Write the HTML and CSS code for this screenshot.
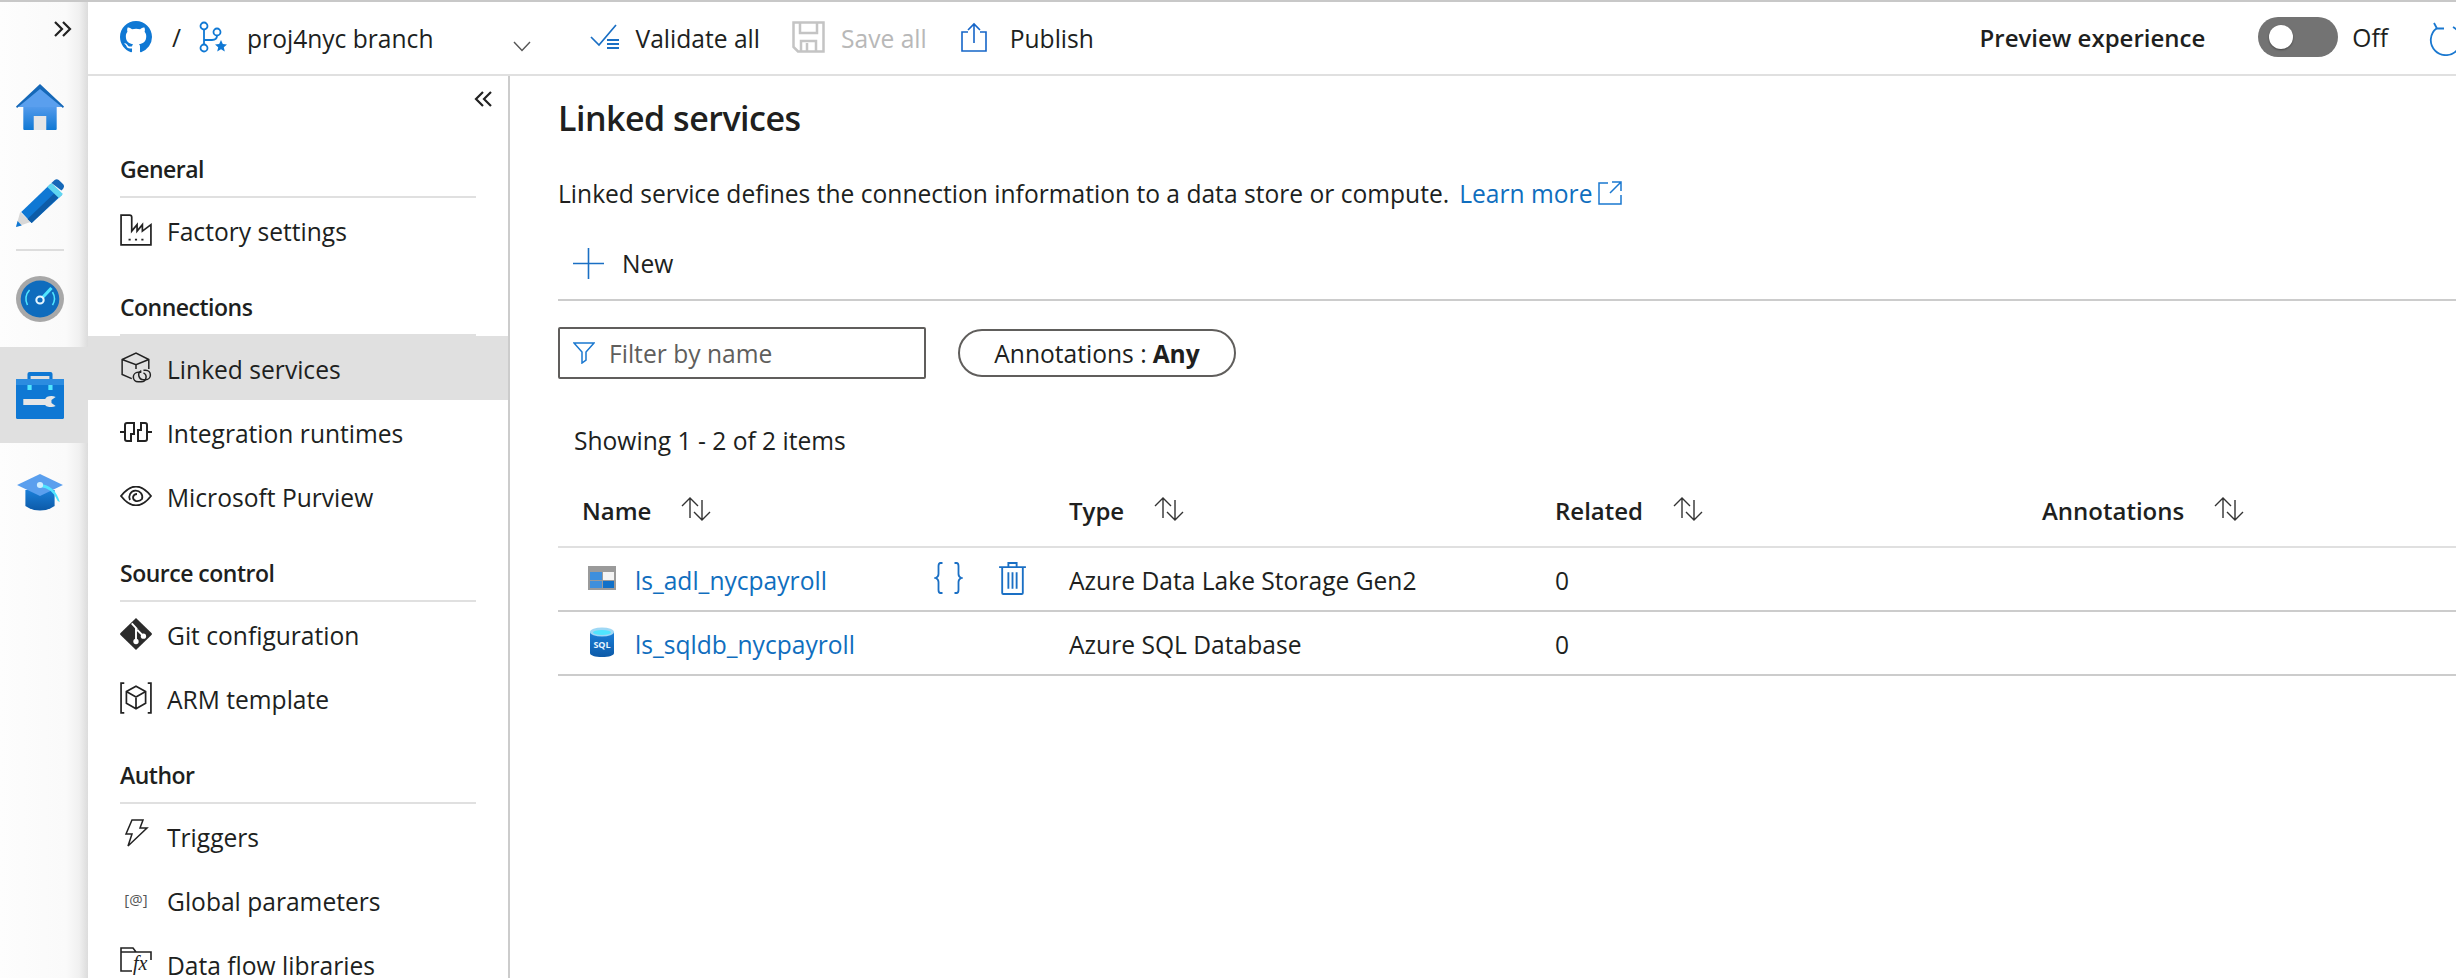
FILE: index.html
```html
<!DOCTYPE html>
<html lang="en">
<head>
    <meta charset="UTF-8">
    <title>Linked services</title>
    <link rel="stylesheet" href="styles.css">
</head>
<body>
    <svg class="defs" width="0" height="0">
        <defs>
            <linearGradient id="blue-v" x1="0" y1="0" x2="0" y2="1">
                <stop offset="0" stop-color="#5ea0ef"/>
                <stop offset="1" stop-color="#0f78d4"/>
            </linearGradient>
            <linearGradient id="sql-v" x1="0" y1="0" x2="0" y2="1">
                <stop offset="0" stop-color="#1b7fd8"/>
                <stop offset="1" stop-color="#0c5aa8"/>
            </linearGradient>
            <g id="sort-arrows" fill="none" stroke="#333" stroke-width="1.400">
                <path d="M9 21V1M1 9l8-8 8 8"/>
                <path d="M21 3v20M13 15l8 8 8-8"/>
            </g>
        </defs>
    </svg>
    <div class="app">
        <nav class="rail">
            <div class="rail-expand">
                <svg width="18" height="18" viewBox="0 0 18 18" fill="none" stroke="#222" stroke-width="2.200"><path d="M1 2l7 7-7 7M9 2l7 7-7 7"/></svg>
            </div>
            <div class="rail-item rail-home">
                <svg width="48" height="48" viewBox="0 0 46 48" preserveAspectRatio="none">
                    <path d="M7 20h32v26a1 1 0 0 1-1 1H8a1 1 0 0 1-1-1z" fill="url(#blue-v)"/>
                    <path d="M23 4L44 24H2z" fill="#5a9fee"/>
                    <path d="M0 23.500L23 1l23 22.500-1 1.500L23 6 1 25z" fill="#1568b8"/>
                    <rect x="17" y="33" width="12" height="14" fill="#e6e6e6"/>
                </svg>
            </div>
            <div class="rail-item rail-author">
                <svg width="48" height="50" viewBox="0 0 46 50" preserveAspectRatio="none">
                    <path d="M0 49l4-15 10 10z" fill="#d8d8d8"/>
                    <path d="M0 49l1.500-6 4 4.500z" fill="#0f78d4"/>
                    <path d="M5 34L33 6l11 11-29 28z" fill="#0f78d4"/>
                    <path d="M15 45L44 16l-4-4-29 29z" fill="#0d5ca8"/>
                    <path d="M30 9l4-4 11 11-4 4z" fill="#5fd6f0"/>
                    <path d="M34 5l3-3q2-1.500 4 0l4 4q2 2 0 5l-1.500 1.500z" fill="#1568b8"/>
                </svg>
            </div>
            <div class="rail-sep"></div>
            <div class="rail-item rail-monitor">
                <svg width="48" height="48" viewBox="0 0 46 48" preserveAspectRatio="none">
                    <circle cx="23" cy="24" r="23" fill="#a8a8a8"/>
                    <circle cx="23" cy="24" r="18.500" fill="#0f6cbd"/>
                    <g fill="none" stroke="#50e6ff" stroke-width="1.500">
                        <path d="M11 30a13 13 0 0 1 2-15"/>
                        <path d="M35 17a13 13 0 0 1 0 13"/>
                        <path d="M25 23l9-10" stroke-width="3"/>
                    </g>
                    <circle cx="23" cy="25" r="3.500" fill="none" stroke="#e6f6ff" stroke-width="2"/>
                </svg>
            </div>
            <div class="rail-item rail-manage">
                <svg width="48" height="48" viewBox="0 0 46 48" preserveAspectRatio="none">
                    <path d="M11 10V3q0-2 2-2h20q2 0 2 2v7h-3V5H14v5z" fill="#0f78d4"/>
                    <rect y="8" width="46" height="40" rx="1.500" fill="#0f78d4"/>
                    <rect y="8" width="46" height="6" fill="#2c8ce0"/>
                    <rect x="11" y="14" width="4" height="5" fill="#50e6ff"/>
                    <rect x="31" y="14" width="4" height="5" fill="#50e6ff"/>
                    <path d="M7 28H28Q29 25 34 25Q36 25 38 26L34 29V32L38 35Q36 36 34 36Q29 36 28 34H7Z" fill="#e6e6e6"/>
                </svg>
            </div>
            <div class="rail-item rail-learn">
                <svg width="48" height="38" viewBox="0 0 46 38" preserveAspectRatio="none">
                    <path d="M9 17h28v16q-6 4.500-14 4.500T9 33z" fill="url(#sql-v)"/>
                    <path d="M23 1l22 11-22 11L1 12z" fill="#5a9fee"/>
                    <path d="M23 11q14 1 19 18l-2-1q-5-13-17-14z" fill="#50e6ff"/>
                    <circle cx="23" cy="12" r="3" fill="#cfeeff"/>
                </svg>
            </div>
        </nav>

        <div class="main">
            <header class="toolbar">
                <svg class="github" width="32" height="32" viewBox="0 0 16 16"><path fill="#0f78d4" d="M8 0C3.58 0 0 3.58 0 8c0 3.540 2.290 6.530 5.470 7.590.4.070.55-.17.55-.38 0-.19-.01-.82-.01-1.490-2.010.37-2.530-.49-2.690-.94-.09-.23-.48-.94-.82-1.130-.28-.15-.68-.52-.01-.53.63-.01 1.080.58 1.230.82.72 1.210 1.870.87 2.330.66.07-.52.28-.87.51-1.070-1.780-.2-3.640-.89-3.640-3.950 0-.87.31-1.590.82-2.150-.08-.2-.36-1.020.08-2.120 0 0 .67-.21 2.200.82.64-.18 1.320-.27 2-.27.68 0 1.360.09 2 .27 1.530-1.040 2.200-.82 2.200-.82.44 1.100.16 1.920.08 2.120.51.56.82 1.270.82 2.150 0 3.070-1.870 3.750-3.650 3.950.29.25.54.73.54 1.480 0 1.070-.01 1.930-.01 2.200 0 .21.15.46.55.38A8.013 8.013 0 0016 8c0-4.420-3.580-8-8-8z"/></svg>
                <span class="slash">/</span>
                <svg class="branch" width="30" height="32" viewBox="0 0 28 32" fill="none" stroke="#0f78d4" stroke-width="1.800">
                    <circle cx="5" cy="5" r="3.500"/>
                    <circle cx="5" cy="27" r="3.500"/>
                    <circle cx="18" cy="11" r="3.500"/>
                    <path d="M5 8.500v15M5 19h8q5 0 5-4.500"/>
                    <path d="M22 19l1.800 4 4.200.4-3.200 2.800 1 4.300-3.800-2.300-3.800 2.300 1-4.300-3.200-2.800 4.200-.4z" fill="#0f78d4" stroke="none"/>
                </svg>
                <span class="branch-name">proj4nyc branch</span>
                <svg class="caret" width="18" height="11" viewBox="0 0 18 11" fill="none" stroke="#555" stroke-width="1.400"><path d="M1 1l8 8.500L17 1"/></svg>

                <button class="tool tool-validate">
                    <svg width="30" height="26" viewBox="0 0 30 26" fill="none" stroke="#1a6fc4" stroke-width="1.700">
                        <path d="M1 13l8 8L26 1"/>
                        <path d="M17 16h12M17 20h12M17 24h12" stroke-width="2.200"/>
                    </svg>
                    Validate all
                </button>
                <button class="tool tool-save" disabled>
                    <svg width="33" height="32" viewBox="0 0 33 32" fill="none" stroke="#c4c4c4" stroke-width="2.500">
                        <path d="M1.500 1.500h30v29H6l-4.500-4.500z"/>
                        <path d="M8 2v10h17V2M9 30V20h15v10M15 22v8"/>
                    </svg>
                    Save all
                </button>
                <button class="tool tool-publish">
                    <svg width="26" height="30" viewBox="0 0 26 30" fill="none" stroke="#1565c8" stroke-width="1.600">
                        <path d="M7 10H1v19h24V10h-6"/>
                        <path d="M13 21V2M7 8l6-6 6 6"/>
                    </svg>
                    Publish
                </button>

                <div class="preview">
                    <span class="preview-label">Preview experience</span>
                    <span class="toggle"><span class="knob"></span></span>
                    <span class="toggle-state">Off</span>
                    <svg class="refresh" width="36" height="34" viewBox="0 0 36 34" fill="none" stroke="#1a78d0" stroke-width="1.800">
                        <path d="M8 6a15 15 0 1 0 16-1"/>
                        <path d="M5 1l3 5.500h7"/>
                    </svg>
                </div>
            </header>

            <div class="body">
                <aside class="sidebar">
                    <div class="collapse">
                        <svg width="18" height="18" viewBox="0 0 18 18" fill="none" stroke="#222" stroke-width="2.200"><path d="M17 2l-7 7 7 7M9 2L2 9l7 7"/></svg>
                    </div>

                    <h2 class="side-heading">General</h2>
                    <a class="side-item">
                        <svg width="32" height="32" viewBox="0 0 30 30" fill="none" stroke="#222" stroke-width="1.600"><path d="M1 29V1h8q2 0 2 2v13l5-6v6l5-6v6l8-6v19zM8 24h2M14 24h2M20 24h2"/></svg>
                        Factory settings
                    </a>

                    <h2 class="side-heading">Connections</h2>
                    <a class="side-item active">
                        <svg width="32" height="32" viewBox="0 0 30 30" fill="none" stroke="#222" stroke-width="1.400"><path d="M11 25L2 21V7l13-6 12 6v9M2 7l13 5 12-5M15 12v4"/><path d="M20 19h-3a4.500 4.500 0 0 0 0 9h3a4.500 4.500 0 0 0 2-8.500"/><path d="M22 17h2a4.500 4.500 0 0 1 0 9h-2a4.500 4.500 0 0 1-2-8.500"/></svg>
                        Linked services
                    </a>
                    <a class="side-item">
                        <svg width="32" height="20" viewBox="0 0 32 20" fill="none" stroke="#222" stroke-width="2"><path d="M0 10h5M27 10h5M5 3q0-2 2-2h7v11h-3v7H7q-2 0-2-2z"/><path d="M27 17q0 2-2 2h-7V8h3V1h4q2 0 2 2z"/></svg>
                        Integration runtimes
                    </a>
                    <a class="side-item">
                        <svg width="32" height="20" viewBox="0 0 32 20" fill="none" stroke="#222" stroke-width="1.800"><path d="M1 10q15-19 30 0-15 19-30 0z"/><path d="M10 14a6.500 6.500 0 1 1 12-1q-2 2.500-6 2-3-.5-3-4 1-3 4-3"/></svg>
                        Microsoft Purview
                    </a>

                    <h2 class="side-heading">Source control</h2>
                    <a class="side-item">
                        <svg width="32" height="32" viewBox="0 0 30 30"><path fill="#2b2b2b" d="M15 0l14.500 14a1.500 1.500 0 0 1 0 2L15 30 .5 16a1.500 1.500 0 0 1 0-2z"/><path d="M11 5l5 5.500M15 9v13M16 11l6 6" stroke="#fff" stroke-width="1.800" fill="none"/><circle cx="15" cy="22" r="2.500" fill="#fff"/><circle cx="22" cy="17" r="2.500" fill="#fff"/></svg>
                        Git configuration
                    </a>
                    <a class="side-item">
                        <svg width="32" height="32" viewBox="0 0 30 30" fill="none" stroke="#222" stroke-width="1.600"><path d="M4 1H1v28h3M26 1h3v28h-3M15 4l9 5v11l-9 5-9-5V9zM6 9l9 5 9-5M15 14v11"/></svg>
                        ARM template
                    </a>

                    <h2 class="side-heading">Author</h2>
                    <a class="side-item">
                        <svg class="icon-up" width="32" height="28" viewBox="0 0 30 28" fill="none" stroke="#222" stroke-width="1.500"><path d="M11 1h11l-3 8h7L7 27l4-12H5z"/></svg>
                        Triggers
                    </a>
                    <a class="side-item">
                        <svg width="32" height="24" viewBox="0 0 32 24"><text class="param-text" x="16" y="17" text-anchor="middle">[@]</text></svg>
                        Global parameters
                    </a>
                    <a class="side-item">
                        <svg class="icon-up" width="32" height="28" viewBox="0 0 32 28" fill="none" stroke="#222" stroke-width="1.600"><path d="M12 24H1V1h12l3 4h15v8M1 5h15"/><text class="fx-text" x="13" y="23">fx</text></svg>
                        Data flow libraries
                    </a>
                </aside>

                <main class="content">
                    <h1 class="title">Linked services</h1>
                    <p class="desc">Linked service defines the connection information to a data store or compute.
                        <a class="link learn">Learn more
                            <svg width="24" height="24" viewBox="0 0 24 24" fill="none" stroke="#1a78d0" stroke-width="1.500"><path d="M10 2H1v21h22v-9M14 1h9v9M23 1L12 12"/></svg>
                        </a>
                    </p>
                    <div class="commands">
                        <button class="new-btn">
                            <svg width="31" height="31" viewBox="0 0 31 31" stroke="#1a6fc4" stroke-width="1.600"><path d="M15.500 0v31M0 15.500h31"/></svg>
                            New
                        </button>
                    </div>
                    <div class="filters">
                        <label class="filter-box">
                            <svg width="22" height="22" viewBox="0 0 22 22" fill="none" stroke="#1a78d0" stroke-width="1.500"><path d="M1 1h20l-8 9v8l-4 3V10z"/></svg>
                            <input type="text" placeholder="Filter by name">
                        </label>
                        <span class="pill">Annotations : <b>Any</b></span>
                    </div>
                    <div class="count">Showing 1 - 2 of 2 items</div>

                    <div class="row head">
                        <div class="cell cell-name">Name <svg class="sort" width="30" height="24" viewBox="0 0 30 24"><use href="#sort-arrows"/></svg></div>
                        <div class="cell">Type <svg class="sort" width="30" height="24" viewBox="0 0 30 24"><use href="#sort-arrows"/></svg></div>
                        <div class="cell">Related <svg class="sort" width="30" height="24" viewBox="0 0 30 24"><use href="#sort-arrows"/></svg></div>
                        <div class="cell">Annotations <svg class="sort" width="30" height="24" viewBox="0 0 30 24"><use href="#sort-arrows"/></svg></div>
                    </div>
                    <div class="row">
                        <div class="cell cell-item">
                            <svg class="item-icon" width="28" height="24" viewBox="0 0 28 24">
                                <rect width="28" height="24" fill="#9a9a9a"/>
                                <rect x="2" y="6" width="12" height="8" fill="#3e8fdc"/>
                                <rect x="15" y="6" width="11" height="8" fill="#f4f4f4"/>
                                <rect x="2" y="15" width="12" height="7" fill="#3e8fdc"/>
                                <rect x="15" y="15" width="11" height="7" fill="#1070c8"/>
                            </svg>
                            <a class="link item-link">ls_adl_nycpayroll</a>
                            <svg class="braces" width="29" height="32" viewBox="0 0 28 32" fill="none" stroke="#1a6fc4" stroke-width="1.800"><path d="M8 1H6q-2 0-2 3v8q0 3-3 4 3 1 3 4v8q0 3 2 3h2M20 1h2q2 0 2 3v8q0 3 3 4-3 1-3 4v8q0 3-2 3h-2"/></svg>
                            <svg class="trash" width="27" height="33" viewBox="0 0 26 32" fill="none" stroke="#1a6fc4" stroke-width="1.800"><path d="M0 5h26M9 5V1h8v4M3 5v25q0 1 1 1h18q1 0 1-1V5M9 10v16M13 10v16M17 10v16"/></svg>
                        </div>
                        <div class="cell">Azure Data Lake Storage Gen2</div>
                        <div class="cell">0</div>
                        <div class="cell"></div>
                    </div>
                    <div class="row">
                        <div class="cell cell-item">
                            <svg class="item-icon" width="28" height="30" viewBox="0 0 28 30">
                                <path d="M2 5v21c0 2.500 5 4 12 4s12-1.500 12-4V5z" fill="url(#sql-v)"/>
                                <ellipse cx="14" cy="5" rx="12" ry="4.500" fill="#9fd8f5"/>
                                <ellipse cx="14" cy="5.500" rx="9" ry="2.500" fill="#50e6ff"/>
                                <text class="sql-text" x="14" y="21" text-anchor="middle">SQL</text>
                            </svg>
                            <a class="link item-link">ls_sqldb_nycpayroll</a>
                        </div>
                        <div class="cell">Azure SQL Database</div>
                        <div class="cell">0</div>
                        <div class="cell"></div>
                    </div>
                </main>
            </div>
        </div>
    </div>
</body>
</html>
```

FILE: styles.css
```css
* {
    box-sizing: border-box;
}
html, body {
    margin: 0;
    height: 100%;
    overflow: hidden;
}
body {
    font-family: "Open Sans", "Noto Sans", sans-serif;
    font-size: 24.6px;
    color: #201f1e;
    background-color: white;
}
button, input {
    font: inherit;
    color: inherit;
    background: none;
    border: none;
    padding: 0;
}
.defs {
    position: absolute;
}
.app {
    display: flex;
    height: 978px;
    border-top: 2px solid #c8c8c8;
}

/* left rail */
.rail {
    flex: 0 0 88px;
    display: flex;
    flex-direction: column;
    background: linear-gradient(to right, #fdfdfd 0, #fafafa 75%, #f0f0f0 90%, #dcdcdc 100%);
}
.rail-expand {
    display: flex;
    justify-content: flex-end;
    padding: 18px 16px 0 0;
    height: 81px;
}
.rail-item {
    display: flex;
    justify-content: center;
    padding-right: 8px;
}
.rail-home {
    height: 95px;
}
.rail-author {
    height: 71px;
}
.rail-sep {
    flex: none;
    height: 2px;
    margin: 0 24px 0 16px;
    background-color: #ddd;
}
.rail-monitor {
    margin-top: 24px;
    height: 48px;
}
.rail-manage {
    margin-top: 24px;
    height: 96px;
    padding-top: 24px;
    background-color: #e0e0e0;
}
.rail-learn {
    margin-top: 30px;
}

.main {
    flex: 1;
    min-width: 0;
    display: flex;
    flex-direction: column;
}

/* top toolbar */
.toolbar {
    flex: 0 0 74px;
    display: flex;
    align-items: center;
    padding-left: 32px;
    border-bottom: 2px solid #e0e0e0;
}
.github {
    margin-top: -2px;
}
.slash {
    margin-left: 20px;
    margin-top: -2px;
}
.branch {
    margin-left: 17px;
    margin-top: -2px;
}
.branch-name {
    margin-left: 19px;
}
.caret {
    margin-left: 80px;
    margin-top: 16px;
}
.tool {
    display: flex;
    align-items: center;
}
.tool svg {
    margin-top: -2px;
}
.tool-validate {
    margin-left: 59px;
    gap: 15px;
}
.tool-save {
    margin-left: 32px;
    gap: 16px;
    color: #b8b8b8;
}
.tool-publish {
    margin-left: 34px;
    gap: 23px;
}
.preview {
    display: flex;
    align-items: center;
    margin-left: auto;
    margin-right: -9px;
    margin-top: -2px;
}
.preview-label {
    font-size: 24px;
    font-weight: 600;
}
.toggle {
    display: flex;
    align-items: center;
    width: 80px;
    height: 40px;
    margin-left: 53px;
    padding-left: 11px;
    border-radius: 20px;
    background-color: #737373;
}
.knob {
    width: 24px;
    height: 24px;
    border-radius: 50%;
    background-color: white;
    box-shadow: 0 1px 2px rgba(0,0,0,0.4);
}
.toggle-state {
    margin-left: 14px;
}
.refresh {
    margin-left: 41px;
    margin-top: 4px;
}

.body {
    flex: 1;
    min-height: 0;
    display: flex;
}

/* settings sidebar */
.sidebar {
    flex: 0 0 422px;
    border-right: 2px solid #ccc;
    overflow: hidden;
}
.collapse {
    display: flex;
    justify-content: flex-end;
    height: 48px;
    padding: 14px 16px 0 0;
}
.side-heading {
    display: flex;
    align-items: flex-end;
    height: 74px;
    margin: 0 32px;
    padding-bottom: 11px;
    font-size: 23px;
    font-weight: 600;
    letter-spacing: -0.5px;
    color: #201f1e;
    border-bottom: 2px solid #e0e0e0;
}
.side-item {
    display: flex;
    align-items: center;
    height: 64px;
    padding: 3px 0 0 32px;
    gap: 15px;
    line-height: 1.1;
    white-space: nowrap;
}
.side-item svg {
    flex: none;
    margin-top: -3px;
}
.side-item .icon-up {
    margin-top: -9px;
}
.side-item.active {
    background-color: #e0e0e0;
}
.param-text {
    font-size: 15px;
    fill: #555;
}
.fx-text {
    font-family: "Liberation Serif", serif;
    font-style: italic;
    font-size: 20px;
    fill: #222;
    stroke: none;
}

/* main panel */
.content {
    flex: 1;
    min-width: 0;
    padding-left: 48px;
    overflow: hidden;
}
.title {
    margin: 0;
    height: 86px;
    padding-top: 19px;
    font-size: 34px;
    line-height: 46px;
    font-weight: 600;
    letter-spacing: -0.5px;
}
.desc {
    display: flex;
    align-items: center;
    margin: 0;
    height: 62px;
    white-space: nowrap;
}
.link {
    color: #106ebe;
}
.learn {
    display: inline-flex;
    align-items: center;
    gap: 6px;
    margin-left: 10px;
}
.commands {
    height: 77px;
    padding: 3px 0 0 15px;
    border-bottom: 2px solid #ccc;
    display: flex;
    align-items: center;
}
.new-btn {
    display: flex;
    align-items: center;
    gap: 18px;
}
.filters {
    display: flex;
    align-items: center;
    gap: 32px;
    margin-top: 26px;
    height: 52px;
}
.filter-box {
    display: flex;
    align-items: center;
    gap: 14px;
    width: 368px;
    height: 52px;
    padding-left: 13px;
    border: 2px solid #605e5c;
    border-radius: 2px;
}
.filter-box input {
    flex: 1;
    min-width: 0;
    outline: none;
}
.filter-box input::placeholder {
    color: #605e5c;
    opacity: 1;
}
.pill {
    display: flex;
    align-items: center;
    justify-content: center;
    gap: 6px;
    width: 278px;
    height: 48px;
    border: 2px solid #605e5c;
    border-radius: 24px;
}
.pill b {
    font-weight: 700;
}
.count {
    display: flex;
    align-items: center;
    height: 62px;
    margin-top: 30px;
    padding-left: 16px;
}
.row {
    display: grid;
    grid-template-columns: 511px 486px 487px 1fr;
    height: 64px;
    border-bottom: 2px solid #ccc;
}
.row.head {
    height: 77px;
    padding-top: 2px;
    font-size: 24px;
    font-weight: 600;
    border-bottom-color: #e0e0e0;
}
.cell {
    display: flex;
    align-items: center;
    white-space: nowrap;
    padding-top: 2px;
}
.head .cell-name {
    padding-left: 24px;
}
.sort {
    margin-left: 30px;
    margin-top: -4px;
}
.cell-item {
    padding-left: 30px;
}
.item-icon {
    flex: none;
    margin-right: 19px;
    margin-top: -4px;
}
.braces {
    margin-left: auto;
    margin-top: -4px;
}
.trash {
    margin-left: 36px;
    margin-right: 43px;
    margin-top: -4px;
}
.sql-text {
    font-size: 9px;
    font-weight: 700;
    fill: #e8f6ff;
}
```
